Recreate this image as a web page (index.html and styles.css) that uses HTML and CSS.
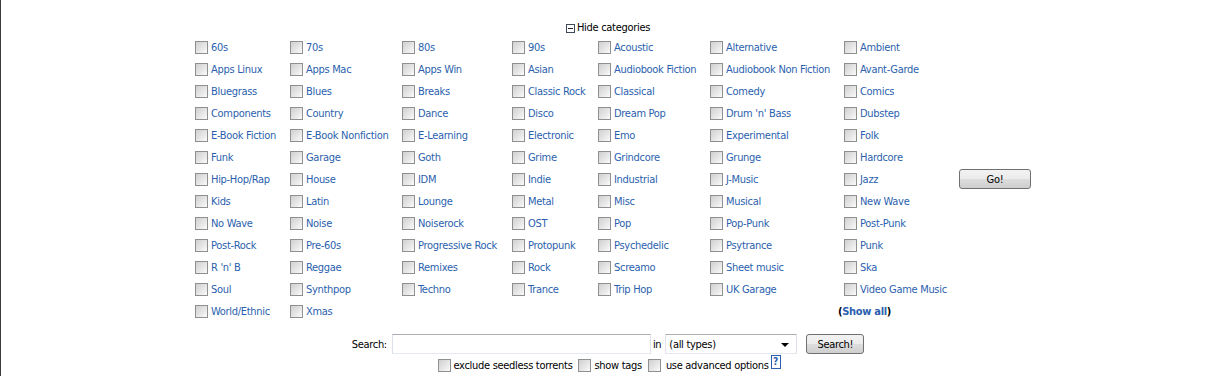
FILE: index.html
```html
<!DOCTYPE html>
<html lang="en">
<head>
  <meta charset="UTF-8">
  <title>Browse torrents</title>
  <link rel="stylesheet" href="styles.css">
</head>
<body>
  <div class="cats-toggle">
    <a href="#" class="toggle-link"><span class="minus-box"></span>Hide categories</a>
  </div>

  <form class="browse">
    <div class="cats-wrap">
      <div class="cats">
        <div class="go-cell"><button type="button" class="btn go-btn">Go!</button></div>

        <label class="cat"><input type="checkbox"><a href="#">60s</a></label>
        <label class="cat"><input type="checkbox"><a href="#">70s</a></label>
        <label class="cat"><input type="checkbox"><a href="#">80s</a></label>
        <label class="cat"><input type="checkbox"><a href="#">90s</a></label>
        <label class="cat"><input type="checkbox"><a href="#">Acoustic</a></label>
        <label class="cat"><input type="checkbox"><a href="#">Alternative</a></label>
        <label class="cat"><input type="checkbox"><a href="#">Ambient</a></label>

        <label class="cat"><input type="checkbox"><a href="#">Apps Linux</a></label>
        <label class="cat"><input type="checkbox"><a href="#">Apps Mac</a></label>
        <label class="cat"><input type="checkbox"><a href="#">Apps Win</a></label>
        <label class="cat"><input type="checkbox"><a href="#">Asian</a></label>
        <label class="cat"><input type="checkbox"><a href="#">Audiobook Fiction</a></label>
        <label class="cat"><input type="checkbox"><a href="#">Audiobook Non Fiction</a></label>
        <label class="cat"><input type="checkbox"><a href="#">Avant-Garde</a></label>

        <label class="cat"><input type="checkbox"><a href="#">Bluegrass</a></label>
        <label class="cat"><input type="checkbox"><a href="#">Blues</a></label>
        <label class="cat"><input type="checkbox"><a href="#">Breaks</a></label>
        <label class="cat"><input type="checkbox"><a href="#">Classic Rock</a></label>
        <label class="cat"><input type="checkbox"><a href="#">Classical</a></label>
        <label class="cat"><input type="checkbox"><a href="#">Comedy</a></label>
        <label class="cat"><input type="checkbox"><a href="#">Comics</a></label>

        <label class="cat"><input type="checkbox"><a href="#">Components</a></label>
        <label class="cat"><input type="checkbox"><a href="#">Country</a></label>
        <label class="cat"><input type="checkbox"><a href="#">Dance</a></label>
        <label class="cat"><input type="checkbox"><a href="#">Disco</a></label>
        <label class="cat"><input type="checkbox"><a href="#">Dream Pop</a></label>
        <label class="cat"><input type="checkbox"><a href="#">Drum 'n' Bass</a></label>
        <label class="cat"><input type="checkbox"><a href="#">Dubstep</a></label>

        <label class="cat"><input type="checkbox"><a href="#">E-Book Fiction</a></label>
        <label class="cat"><input type="checkbox"><a href="#">E-Book Nonfiction</a></label>
        <label class="cat"><input type="checkbox"><a href="#">E-Learning</a></label>
        <label class="cat"><input type="checkbox"><a href="#">Electronic</a></label>
        <label class="cat"><input type="checkbox"><a href="#">Emo</a></label>
        <label class="cat"><input type="checkbox"><a href="#">Experimental</a></label>
        <label class="cat"><input type="checkbox"><a href="#">Folk</a></label>

        <label class="cat"><input type="checkbox"><a href="#">Funk</a></label>
        <label class="cat"><input type="checkbox"><a href="#">Garage</a></label>
        <label class="cat"><input type="checkbox"><a href="#">Goth</a></label>
        <label class="cat"><input type="checkbox"><a href="#">Grime</a></label>
        <label class="cat"><input type="checkbox"><a href="#">Grindcore</a></label>
        <label class="cat"><input type="checkbox"><a href="#">Grunge</a></label>
        <label class="cat"><input type="checkbox"><a href="#">Hardcore</a></label>

        <label class="cat"><input type="checkbox"><a href="#">Hip-Hop/Rap</a></label>
        <label class="cat"><input type="checkbox"><a href="#">House</a></label>
        <label class="cat"><input type="checkbox"><a href="#">IDM</a></label>
        <label class="cat"><input type="checkbox"><a href="#">Indie</a></label>
        <label class="cat"><input type="checkbox"><a href="#">Industrial</a></label>
        <label class="cat"><input type="checkbox"><a href="#">J-Music</a></label>
        <label class="cat"><input type="checkbox"><a href="#">Jazz</a></label>

        <label class="cat"><input type="checkbox"><a href="#">Kids</a></label>
        <label class="cat"><input type="checkbox"><a href="#">Latin</a></label>
        <label class="cat"><input type="checkbox"><a href="#">Lounge</a></label>
        <label class="cat"><input type="checkbox"><a href="#">Metal</a></label>
        <label class="cat"><input type="checkbox"><a href="#">Misc</a></label>
        <label class="cat"><input type="checkbox"><a href="#">Musical</a></label>
        <label class="cat"><input type="checkbox"><a href="#">New Wave</a></label>

        <label class="cat"><input type="checkbox"><a href="#">No Wave</a></label>
        <label class="cat"><input type="checkbox"><a href="#">Noise</a></label>
        <label class="cat"><input type="checkbox"><a href="#">Noiserock</a></label>
        <label class="cat"><input type="checkbox"><a href="#">OST</a></label>
        <label class="cat"><input type="checkbox"><a href="#">Pop</a></label>
        <label class="cat"><input type="checkbox"><a href="#">Pop-Punk</a></label>
        <label class="cat"><input type="checkbox"><a href="#">Post-Punk</a></label>

        <label class="cat"><input type="checkbox"><a href="#">Post-Rock</a></label>
        <label class="cat"><input type="checkbox"><a href="#">Pre-60s</a></label>
        <label class="cat"><input type="checkbox"><a href="#">Progressive Rock</a></label>
        <label class="cat"><input type="checkbox"><a href="#">Protopunk</a></label>
        <label class="cat"><input type="checkbox"><a href="#">Psychedelic</a></label>
        <label class="cat"><input type="checkbox"><a href="#">Psytrance</a></label>
        <label class="cat"><input type="checkbox"><a href="#">Punk</a></label>

        <label class="cat"><input type="checkbox"><a href="#">R 'n' B</a></label>
        <label class="cat"><input type="checkbox"><a href="#">Reggae</a></label>
        <label class="cat"><input type="checkbox"><a href="#">Remixes</a></label>
        <label class="cat"><input type="checkbox"><a href="#">Rock</a></label>
        <label class="cat"><input type="checkbox"><a href="#">Screamo</a></label>
        <label class="cat"><input type="checkbox"><a href="#">Sheet music</a></label>
        <label class="cat"><input type="checkbox"><a href="#">Ska</a></label>

        <label class="cat"><input type="checkbox"><a href="#">Soul</a></label>
        <label class="cat"><input type="checkbox"><a href="#">Synthpop</a></label>
        <label class="cat"><input type="checkbox"><a href="#">Techno</a></label>
        <label class="cat"><input type="checkbox"><a href="#">Trance</a></label>
        <label class="cat"><input type="checkbox"><a href="#">Trip Hop</a></label>
        <label class="cat"><input type="checkbox"><a href="#">UK Garage</a></label>
        <label class="cat"><input type="checkbox"><a href="#">Video Game Music</a></label>

        <label class="cat"><input type="checkbox"><a href="#">World/Ethnic</a></label>
        <label class="cat"><input type="checkbox"><a href="#">Xmas</a></label>
        <div class="show-all">(<a href="#">Show all</a>)</div>
      </div>
    </div>

    <div class="search-row">
      <label for="searchtext">Search:</label>
      <input type="text" id="searchtext" class="search-input">
      <span class="in-word">in</span>
      <span class="select-wrap">
        <select class="type-select">
          <option>(all types)</option>
        </select>
      </span>
      <button type="button" class="btn search-btn">Search!</button>
    </div>

    <div class="options-row">
      <label class="opt"><input type="checkbox">exclude seedless torrents</label>
      <label class="opt"><input type="checkbox">show tags</label>
      <label class="opt opt-adv"><input type="checkbox">use advanced options</label><a href="#" class="help">?</a>
    </div>
  </form>
</body>
</html>
```

FILE: styles.css
```css
html {
  background: #fff;
}
body {
  margin: 0;
  min-height: 376px;
  border-left: 1px solid #3c3c3c;
  font-family: "DejaVu Sans Condensed", "DejaVu Sans", sans-serif;
  font-stretch: condensed;
  font-size: 11px;
  letter-spacing: -0.3px;
  color: #000;
}
a {
  color: #2b5fae;
  text-decoration: none;
}

/* toggle line */
.cats-toggle {
  padding-top: 21px;
  height: 14px;
  line-height: 14px;
  text-align: center;
}
.toggle-link {
  color: #000;
  display: inline-flex;
  align-items: center;
}
.minus-box {
  width: 9px;
  height: 9px;
  border: 1px solid #3d4a5a;
  box-sizing: border-box;
  margin-right: 2px;
  position: relative;
  background: #fff;
}
.minus-box::after {
  content: "";
  position: absolute;
  left: 1px;
  right: 1px;
  top: 3px;
  height: 1px;
  background: #222;
}

/* checkboxes */
input[type="checkbox"] {
  appearance: none;
  -webkit-appearance: none;
  width: 13px;
  height: 13px;
  margin: 0 3px 0 0;
  box-sizing: border-box;
  border: 1px solid #8e8f8f;
  background: linear-gradient(135deg, #cfd0cf 0%, #e6e6e6 55%, #fbfbfb 100%);
  flex: none;
}

/* category grid */
.cats-wrap {
  display: flex;
  justify-content: center;
  padding-left: 10px;
  margin-top: 1px;
}
.cats {
  display: grid;
  grid-template-columns: 95px 112px 110px 86px 112px 134px 115px 72px;
  grid-auto-rows: 22px;
}
.cat {
  display: flex;
  align-items: center;
  white-space: nowrap;
}
.cat a {
  padding-top: 1px;
}
.go-cell {
  grid-column: 8;
  grid-row: 1 / span 13;
  align-self: center;
}
.show-all {
  grid-column: 7;
  display: flex;
  align-items: center;
  margin-left: -6px;
  padding-top: 1px;
  font-weight: bold;
}

/* buttons */
.btn {
  height: 20px;
  border: 1px solid #707070;
  border-radius: 3px;
  background: linear-gradient(#f2f2f2 0%, #ebebeb 50%, #dddddd 51%, #cfcfcf 100%);
  font-family: inherit;
  font-stretch: condensed;
  font-size: 11px;
  letter-spacing: -0.3px;
  color: #000;
  padding: 0;
}
.go-btn {
  width: 72px;
  display: block;
}
.search-btn {
  width: 58px;
  margin-left: 9px;
}

/* search line */
.search-row {
  margin-top: 12px;
  display: flex;
  justify-content: center;
  align-items: center;
  height: 20px;
}
.search-row label {
  margin-right: 5px;
}
.search-input {
  width: 259px;
  height: 20px;
  box-sizing: border-box;
  border: 1px solid #abadb3;
  border-color: #abadb3 #e2e3ea #e3e9ef #dbdfe6;
  margin: 0;
}
.in-word {
  margin: 0 4px 0 2px;
}
.select-wrap {
  position: relative;
  display: inline-block;
}
.type-select {
  appearance: none;
  -webkit-appearance: none;
  width: 132px;
  height: 20px;
  box-sizing: border-box;
  border: 1px solid #abadb3;
  border-color: #abadb3 #dbdfe6 #e3e9ef #e2e3ea;
  background: #fff;
  font-family: inherit;
  font-stretch: condensed;
  font-size: 11px;
  letter-spacing: -0.3px;
  padding: 0 0 0 3px;
  margin: 0;
  display: block;
}
.select-wrap::after {
  content: "";
  position: absolute;
  right: 8px;
  top: 9px;
  border-left: 4px solid transparent;
  border-right: 4px solid transparent;
  border-top: 4px solid #000;
}

/* options line */
.options-row {
  display: flex;
  justify-content: center;
  align-items: flex-end;
  height: 18px;
  margin-left: 2px;
}
.opt {
  display: flex;
  align-items: center;
  margin-right: 6px;
  line-height: 13px;
}
.opt-adv {
  margin-right: 2px;
}
.opt-adv input {
  margin-right: 5px;
}
.help {
  display: inline-block;
  width: 10px;
  height: 14px;
  box-sizing: border-box;
  border: 1px solid #2b5fae;
  font-size: 10px;
  font-weight: bold;
  line-height: 12px;
  text-align: center;
  align-self: flex-start;
  margin-top: 1px;
}
```
